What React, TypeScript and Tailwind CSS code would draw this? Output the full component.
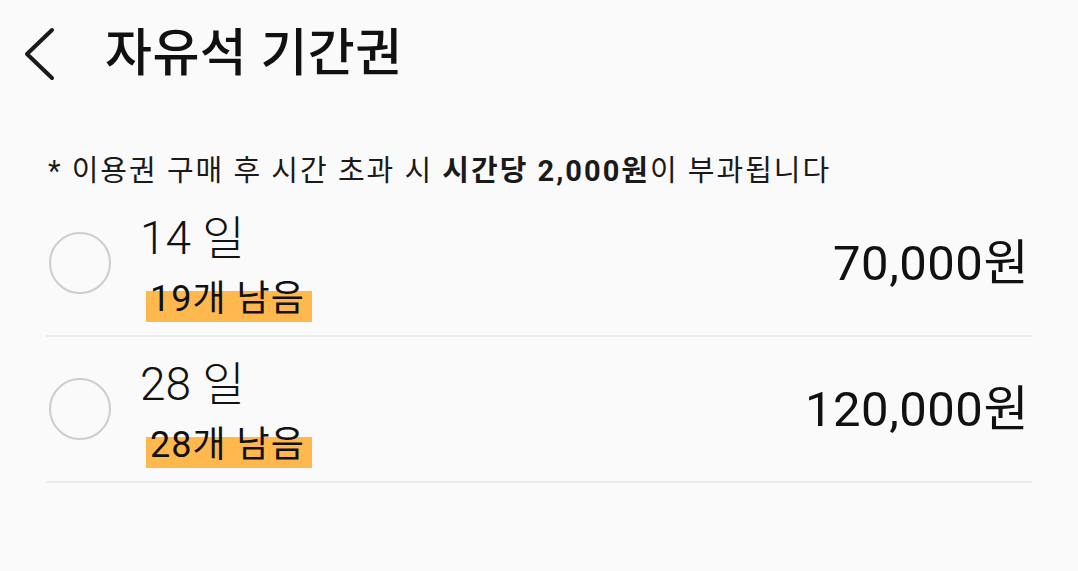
const plans = [
  { days: "14 일", left: "19개 남음", price: "70,000원" },
  { days: "28 일", left: "28개 남음", price: "120,000원" },
];

export default function App() {
  return (
    <div
      className="h-[571px] w-full bg-[#fafafa] text-[#111] overflow-hidden"
      style={{ fontFamily: 'Roboto, "Noto Sans CJK KR", sans-serif' }}
    >
      {/* Header */}
      <header className="flex items-center h-[110px] pl-[22px]">
        <svg width="36" height="56" viewBox="0 0 36 56" fill="none" className="mt-[-2px]">
          <path d="M30 4 L5 28 L30 52" stroke="#1a1a1a" strokeWidth="4" strokeLinecap="round" strokeLinejoin="round" />
        </svg>
        <h1 className="ml-[47px] mt-[-4px] text-[51px] font-medium leading-none tracking-[0.5px]">자유석 기간권</h1>
      </header>

      {/* Notice */}
      <p className="mt-[43px] pl-[48px] text-[29px] leading-[36px] tracking-[2px] text-[#1a1a1a]">
        * 이용권 구매 후 시간 초과 시 <span className="font-bold">시간당 2,000원</span>이 부과됩니다
      </p>

      {/* Plans */}
      <ul className="mx-[46px] mt-[2px]">
        {plans.map((p) => (
          <li key={p.days} className="flex items-center h-[146px] border-b-2 border-[#ebebeb]">
            <span className="ml-[3px] w-[62px] h-[62px] rounded-full border-2 border-[#cdcdcd] shrink-0" />
            <div className="ml-[29px] pt-[8px] flex flex-col items-start">
              <span className="text-[46px] font-light leading-[50px]">{p.days}</span>
              <span className="mt-[14px] ml-[6px] pl-[4px] pr-[7px] text-[36px] leading-[45px] tracking-[1px] bg-[linear-gradient(to_bottom,transparent_31%,#ffb84d_31%)]">
                {p.left}
              </span>
            </div>
            <span className="ml-auto mr-[3px] text-[49px] leading-none tracking-[0.5px]">{p.price}</span>
          </li>
        ))}
      </ul>
    </div>
  );
}
